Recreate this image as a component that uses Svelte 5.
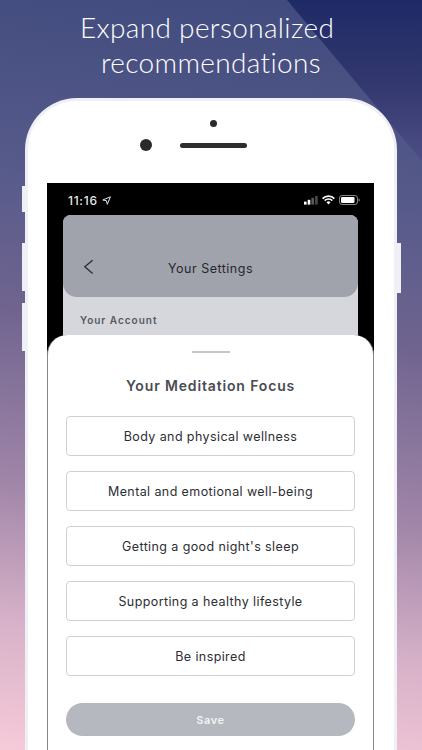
<script>
  // Focus options shown in the bottom sheet
  let options = [
    'Body and physical wellness',
    'Mental and emotional well-being',
    "Getting a good night's sleep",
    'Supporting a healthy lifestyle',
    'Be inspired'
  ];
</script>

<div class="page">
  <div class="shade"></div>
  <h1>Expand personalized&nbsp;<br />recommendations</h1>

  <div class="phone">
    <span class="side l1"></span>
    <span class="side l2"></span>
    <span class="side l3"></span>
    <span class="side r1"></span>

    <div class="top">
      <span class="dot"></span>
      <span class="camera"></span>
      <span class="speaker"></span>
    </div>

    <div class="screen">
      <div class="status">
        <span class="time">11:16
          <svg width="9" height="9" viewBox="0 0 9 9"><path d="M8.4 .8 .8 4l3.6 .7 .9 3.6z" fill="none" stroke="#e8e8e8" stroke-width="1" stroke-linejoin="round"/></svg>
        </span>
        <span class="indicators">
          <svg width="14" height="9" viewBox="0 0 14 9">
            <rect x="0" y="5.6" width="2.6" height="3" fill="#fff"/>
            <rect x="3.7" y="3.8" width="2.6" height="4.8" fill="#fff"/>
            <rect x="7.4" y="1.8" width="2.6" height="6.8" fill="#5a5a5a"/>
            <rect x="11.1" y="0" width="2.6" height="8.6" fill="#4a4a4a"/>
          </svg>
          <svg width="13" height="10" viewBox="0 0 13 10">
            <path d="M.6 3.6a8.2 8.2 0 0 1 11.8 0M2.7 5.6a5.3 5.3 0 0 1 7.6 0" fill="none" stroke="#fff" stroke-width="1.6"/>
            <path d="M4.5 7.3a2.7 2.7 0 0 1 4 0L6.5 9.6z" fill="#fff"/>
          </svg>
          <svg width="21" height="10" viewBox="0 0 21 10">
            <rect x=".5" y=".5" width="18" height="9" rx="2.6" fill="none" stroke="#8a8a8a"/>
            <rect x="2" y="2" width="13.5" height="6" rx="1.2" fill="#fff"/>
            <path d="M19.6 3.4c.9.3 1.2.9 1.2 1.6s-.3 1.3-1.2 1.6z" fill="#8a8a8a"/>
          </svg>
        </span>
      </div>

      <div class="panel">
        <div class="bar">
          <svg class="back" width="11" height="16" viewBox="0 0 11 16"><path d="M9.6 1.2 1.8 7.8l7.8 6.8" fill="none" stroke="#2b2d33" stroke-width="1.3"/></svg>
          <span>Your Settings</span>
        </div>
        <div class="account">Your Account</div>
      </div>

      <div class="sheet">
        <span class="grip"></span>
        <h2>Your Meditation Focus</h2>
        <div class="list">
          {#each options as opt}
            <button class="opt">{opt}</button>
          {/each}
        </div>
        <button class="save">Save</button>
      </div>
    </div>
  </div>
</div>

<style>
:global(body) {
  margin: 0;
}
.page {
  position: relative;
  width: 422px;
  height: 750px;
  overflow: hidden;
  padding-top: 10px;
  box-sizing: border-box;
  background: linear-gradient(186deg, #3f4a7c 0%, #565a8b 26%, #6f648f 44%, #a085a8 66%, #d8b2c9 84%, #f6cbd9 100%);
}
.shade {
  position: absolute;
  top: 0;
  right: 0;
  width: 135px;
  height: 161px;
  clip-path: polygon(0 0, 100% 0, 100% 100%);
  background: linear-gradient(180deg, #1e2a66 0%, #34396f 55%, #4d4e85 100%);
}
h1 {
  position: relative;
  margin: 0;
  height: 88px;
  font-family: Lato, sans-serif;
  font-size: 28px;
  font-weight: 300;
  line-height: 35px;
  letter-spacing: 0.35px;
  text-align: center;
  color: #fff;
}
.phone {
  position: relative;
  box-sizing: border-box;
  width: 372px;
  height: 700px;
  margin-left: 25px;
  background: #fff;
  border: 3px solid #eef0f5;
  border-bottom: 0;
  border-radius: 52px 52px 0 0;
}
.side {
  position: absolute;
  width: 3px;
  background: #eef0f5;
}
.l1 { left: -6px; top: 85px; height: 26px; }
.l2 { left: -6px; top: 142px; height: 48px; }
.l3 { left: -6px; top: 202px; height: 48px; }
.r1 { right: -7px; top: 142px; width: 4px; height: 50px; }
.top {
  position: relative;
  height: 82px;
}
.dot {
  position: absolute;
  left: 182px;
  top: 19px;
  width: 7px;
  height: 7px;
  border-radius: 50%;
  background: #2a2a2a;
}
.camera {
  position: absolute;
  left: 112px;
  top: 38px;
  width: 12px;
  height: 12px;
  border-radius: 50%;
  background: #2a2a2a;
}
.speaker {
  position: absolute;
  left: 152px;
  top: 42px;
  width: 67px;
  height: 5px;
  border-radius: 3px;
  background: #2e2e2e;
}
.screen {
  position: relative;
  box-sizing: border-box;
  width: 327px;
  height: 570px;
  margin-left: 19px;
  padding: 0 16px;
  background: #000;
  font-family: Inter, sans-serif;
}
.status {
  display: flex;
  justify-content: space-between;
  align-items: center;
  height: 32px;
  padding: 2px 0 0 5px;
  box-sizing: border-box;
  color: #e8e8e8;
}
.time {
  display: flex;
  align-items: center;
  gap: 4px;
  font-size: 12px;
  font-weight: 500;
  letter-spacing: 0.7px;
}
.indicators {
  display: flex;
  align-items: center;
  gap: 4px;
  margin-right: -2px;
}
.panel {
  height: 140px;
  background: #d6d7dc;
  border-radius: 8px 8px 0 0;
}
.bar {
  position: relative;
  display: flex;
  align-items: center;
  justify-content: center;
  height: 82px;
  padding-top: 25px;
  box-sizing: border-box;
  background: #a0a3ab;
  border-radius: 8px 8px 14px 14px;
  font-size: 12.5px;
  letter-spacing: 0.5px;
  color: #26282d;
}
.back {
  position: absolute;
  left: 20px;
  top: 44px;
}
.account {
  padding: 17px 17px 0;
  font-size: 10px;
  font-weight: 600;
  letter-spacing: 1px;
  color: #55575e;
}
.sheet {
  position: absolute;
  left: 0;
  right: 0;
  top: 152px;
  bottom: 0;
  box-sizing: border-box;
  display: flex;
  flex-direction: column;
  align-items: center;
  padding: 0 18px;
  background: #fff;
  border: 1px solid #888;
  border-top: 0;
  border-bottom: 0;
  border-radius: 20px 20px 0 0;
}
.grip {
  width: 38px;
  height: 2px;
  margin-top: 16px;
  background: #c4c6cb;
}
h2 {
  margin: 24px 0 0;
  font-size: 14px;
  font-weight: 600;
  line-height: 18px;
  letter-spacing: 0.85px;
  color: #4a4c52;
}
.list {
  display: flex;
  flex-direction: column;
  gap: 15px;
  width: 100%;
  margin-top: 21px;
}
.opt {
  height: 40px;
  padding: 0;
  background: #fff;
  border: 1px solid #cfd1d6;
  border-radius: 4px;
  font-family: inherit;
  font-size: 12.5px;
  letter-spacing: 0.4px;
  color: #2c2e33;
}
.save {
  width: 100%;
  height: 33px;
  margin-top: 27px;
  padding: 0;
  background: #b5b8bf;
  border: 0;
  border-radius: 17px;
  font-family: inherit;
  font-size: 11px;
  font-weight: 600;
  letter-spacing: 0.6px;
  color: #f2f3f5;
}
</style>
